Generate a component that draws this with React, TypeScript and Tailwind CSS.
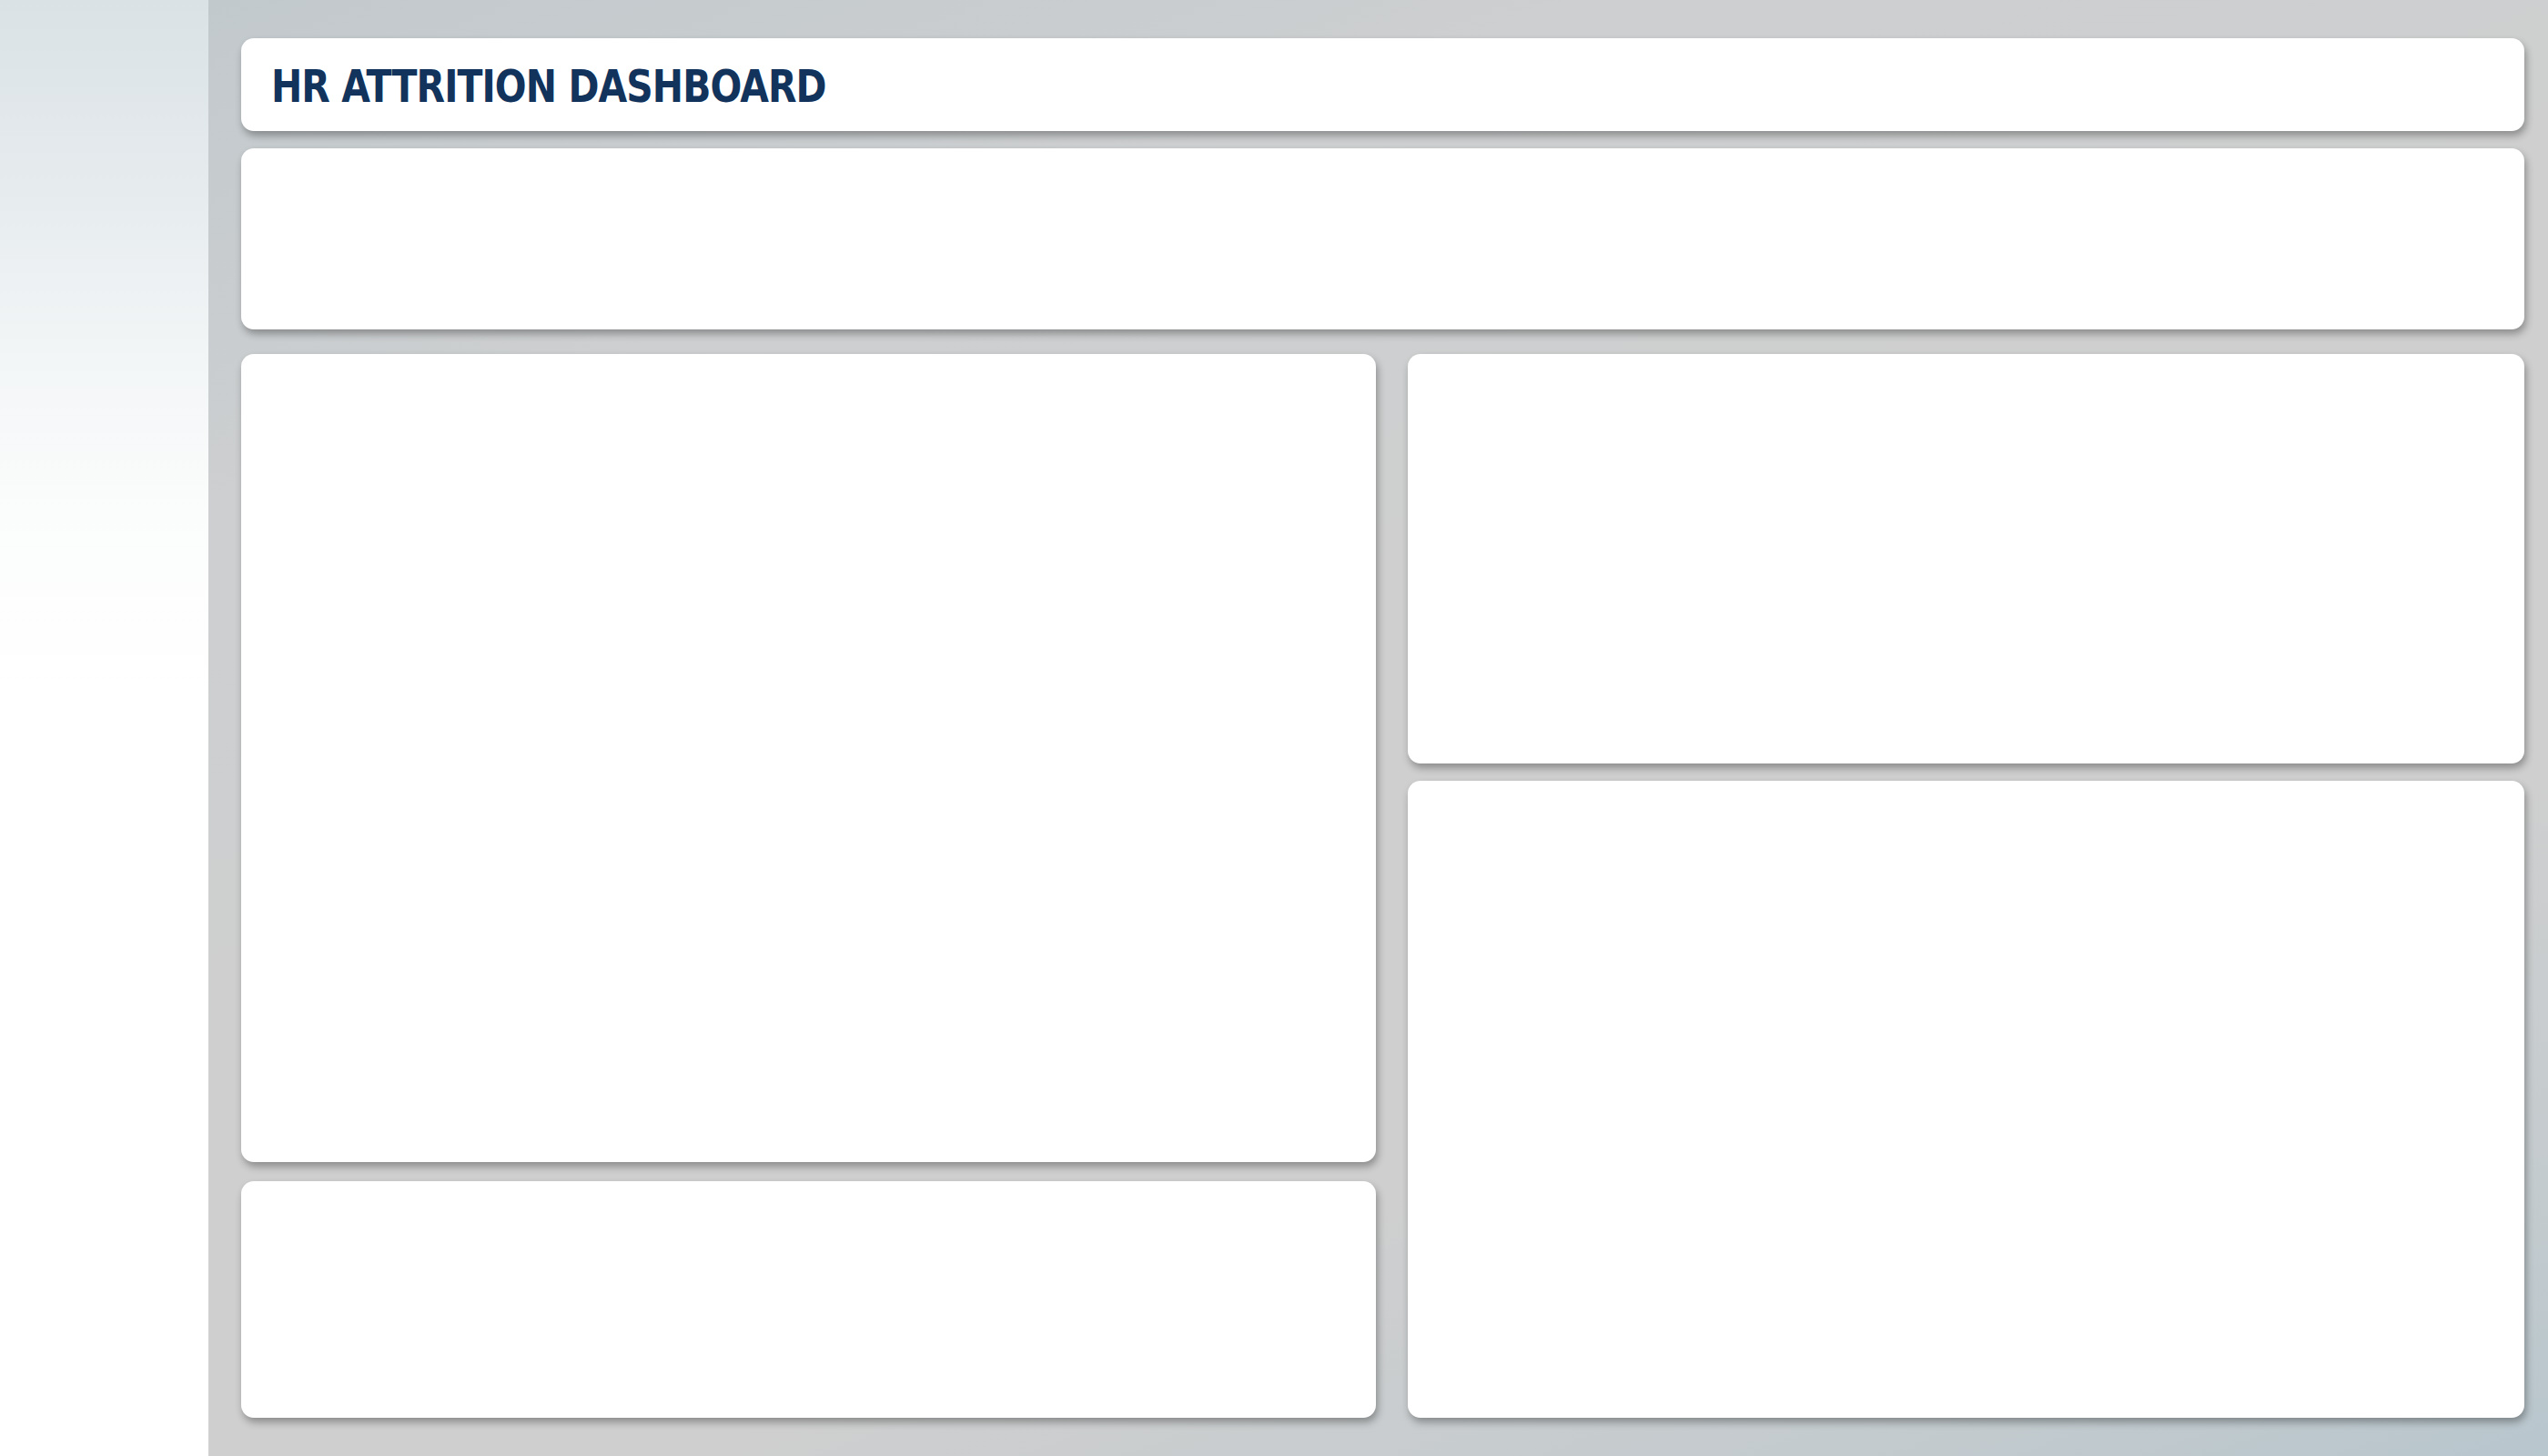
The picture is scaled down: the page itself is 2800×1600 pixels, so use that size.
export default function App() {
  const card =
    "bg-white rounded-[14px] shadow-[2px_5px_9px_rgba(0,0,0,0.32)]";

  return (
    <div className="flex h-screen w-full overflow-hidden">
      <aside className="w-[229px] shrink-0 bg-[linear-gradient(180deg,#dae2e6_0%,#e8edef_15%,#f3f6f7_25%,#fbfcfc_35%,#ffffff_48%,#ffffff_100%)]" />

      <main className="flex flex-1 flex-col gap-[19px] pl-[36px] pr-[26px] py-[42px] bg-[linear-gradient(160deg,#c2c9cd_0%,#cdcfd0_22%,#cfcfcf_50%,#cfcfcf_70%,#c4cbce_88%,#b8c6cd_100%)]">
        <header className={`${card} flex h-[102px] items-center px-[33px] pt-[4px]`}>
          <h1 className="whitespace-nowrap text-[50px] font-bold font-stretch-condensed leading-none tracking-[-1px] text-[#12335c] font-['DejaVu_Sans',sans-serif] [transform-origin:left_center] [transform:scaleX(0.91)]">
            HR ATTRITION DASHBOARD
          </h1>
        </header>

        <section className={`${card} h-[199px]`} />

        <div className="mt-[8px] grid flex-1 grid-cols-[1247fr_1227fr] gap-x-[35px]">
          <div className="flex flex-col gap-[21px]">
            <section className={`${card} h-[888px]`} />
            <section className={`${card} flex-1`} />
          </div>
          <div className="flex flex-col gap-[19px]">
            <section className={`${card} h-[450px]`} />
            <section className={`${card} flex-1`} />
          </div>
        </div>
      </main>
    </div>
  );
}
